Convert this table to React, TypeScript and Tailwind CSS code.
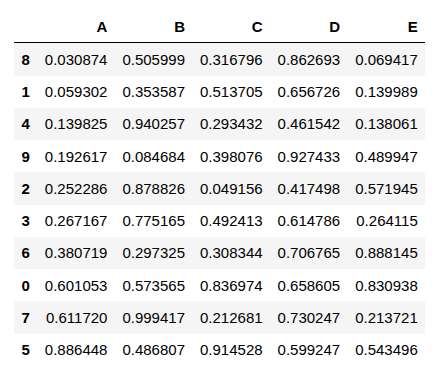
const columns = ['A', 'B', 'C', 'D', 'E'];

const rows: [string, string[]][] = [
  ['8', ['0.030874', '0.505999', '0.316796', '0.862693', '0.069417']],
  ['1', ['0.059302', '0.353587', '0.513705', '0.656726', '0.139989']],
  ['4', ['0.139825', '0.940257', '0.293432', '0.461542', '0.138061']],
  ['9', ['0.192617', '0.084684', '0.398076', '0.927433', '0.489947']],
  ['2', ['0.252286', '0.878826', '0.049156', '0.417498', '0.571945']],
  ['3', ['0.267167', '0.775165', '0.492413', '0.614786', '0.264115']],
  ['6', ['0.380719', '0.297325', '0.308344', '0.706765', '0.888145']],
  ['0', ['0.601053', '0.573565', '0.836974', '0.658605', '0.830938']],
  ['7', ['0.611720', '0.999417', '0.212681', '0.730247', '0.213721']],
  ['5', ['0.886448', '0.486807', '0.914528', '0.599247', '0.543496']],
];

export default function App() {
  return (
    <div className="min-h-screen w-full bg-white pt-[10px] pl-[14px] font-['Liberation_Sans',Arial,sans-serif] text-[15px] leading-[17.25px] text-black">
      <table className="border-collapse">
        <thead>
          <tr className="border-b border-black">
            <th className="p-[7.5px] text-right font-bold"></th>
            {columns.map((c) => (
              <th key={c} className="p-[7.5px] text-right font-bold">
                {c}
              </th>
            ))}
          </tr>
        </thead>
        <tbody>
          {rows.map(([idx, vals], i) => (
            <tr key={idx} className={i % 2 === 0 ? 'bg-[#f5f5f5]' : 'bg-white'}>
              <th className="p-[7.5px] text-right font-bold">{idx}</th>
              {vals.map((v, j) => (
                <td key={j} className="p-[7.5px] text-right">
                  {v}
                </td>
              ))}
            </tr>
          ))}
        </tbody>
      </table>
    </div>
  );
}
